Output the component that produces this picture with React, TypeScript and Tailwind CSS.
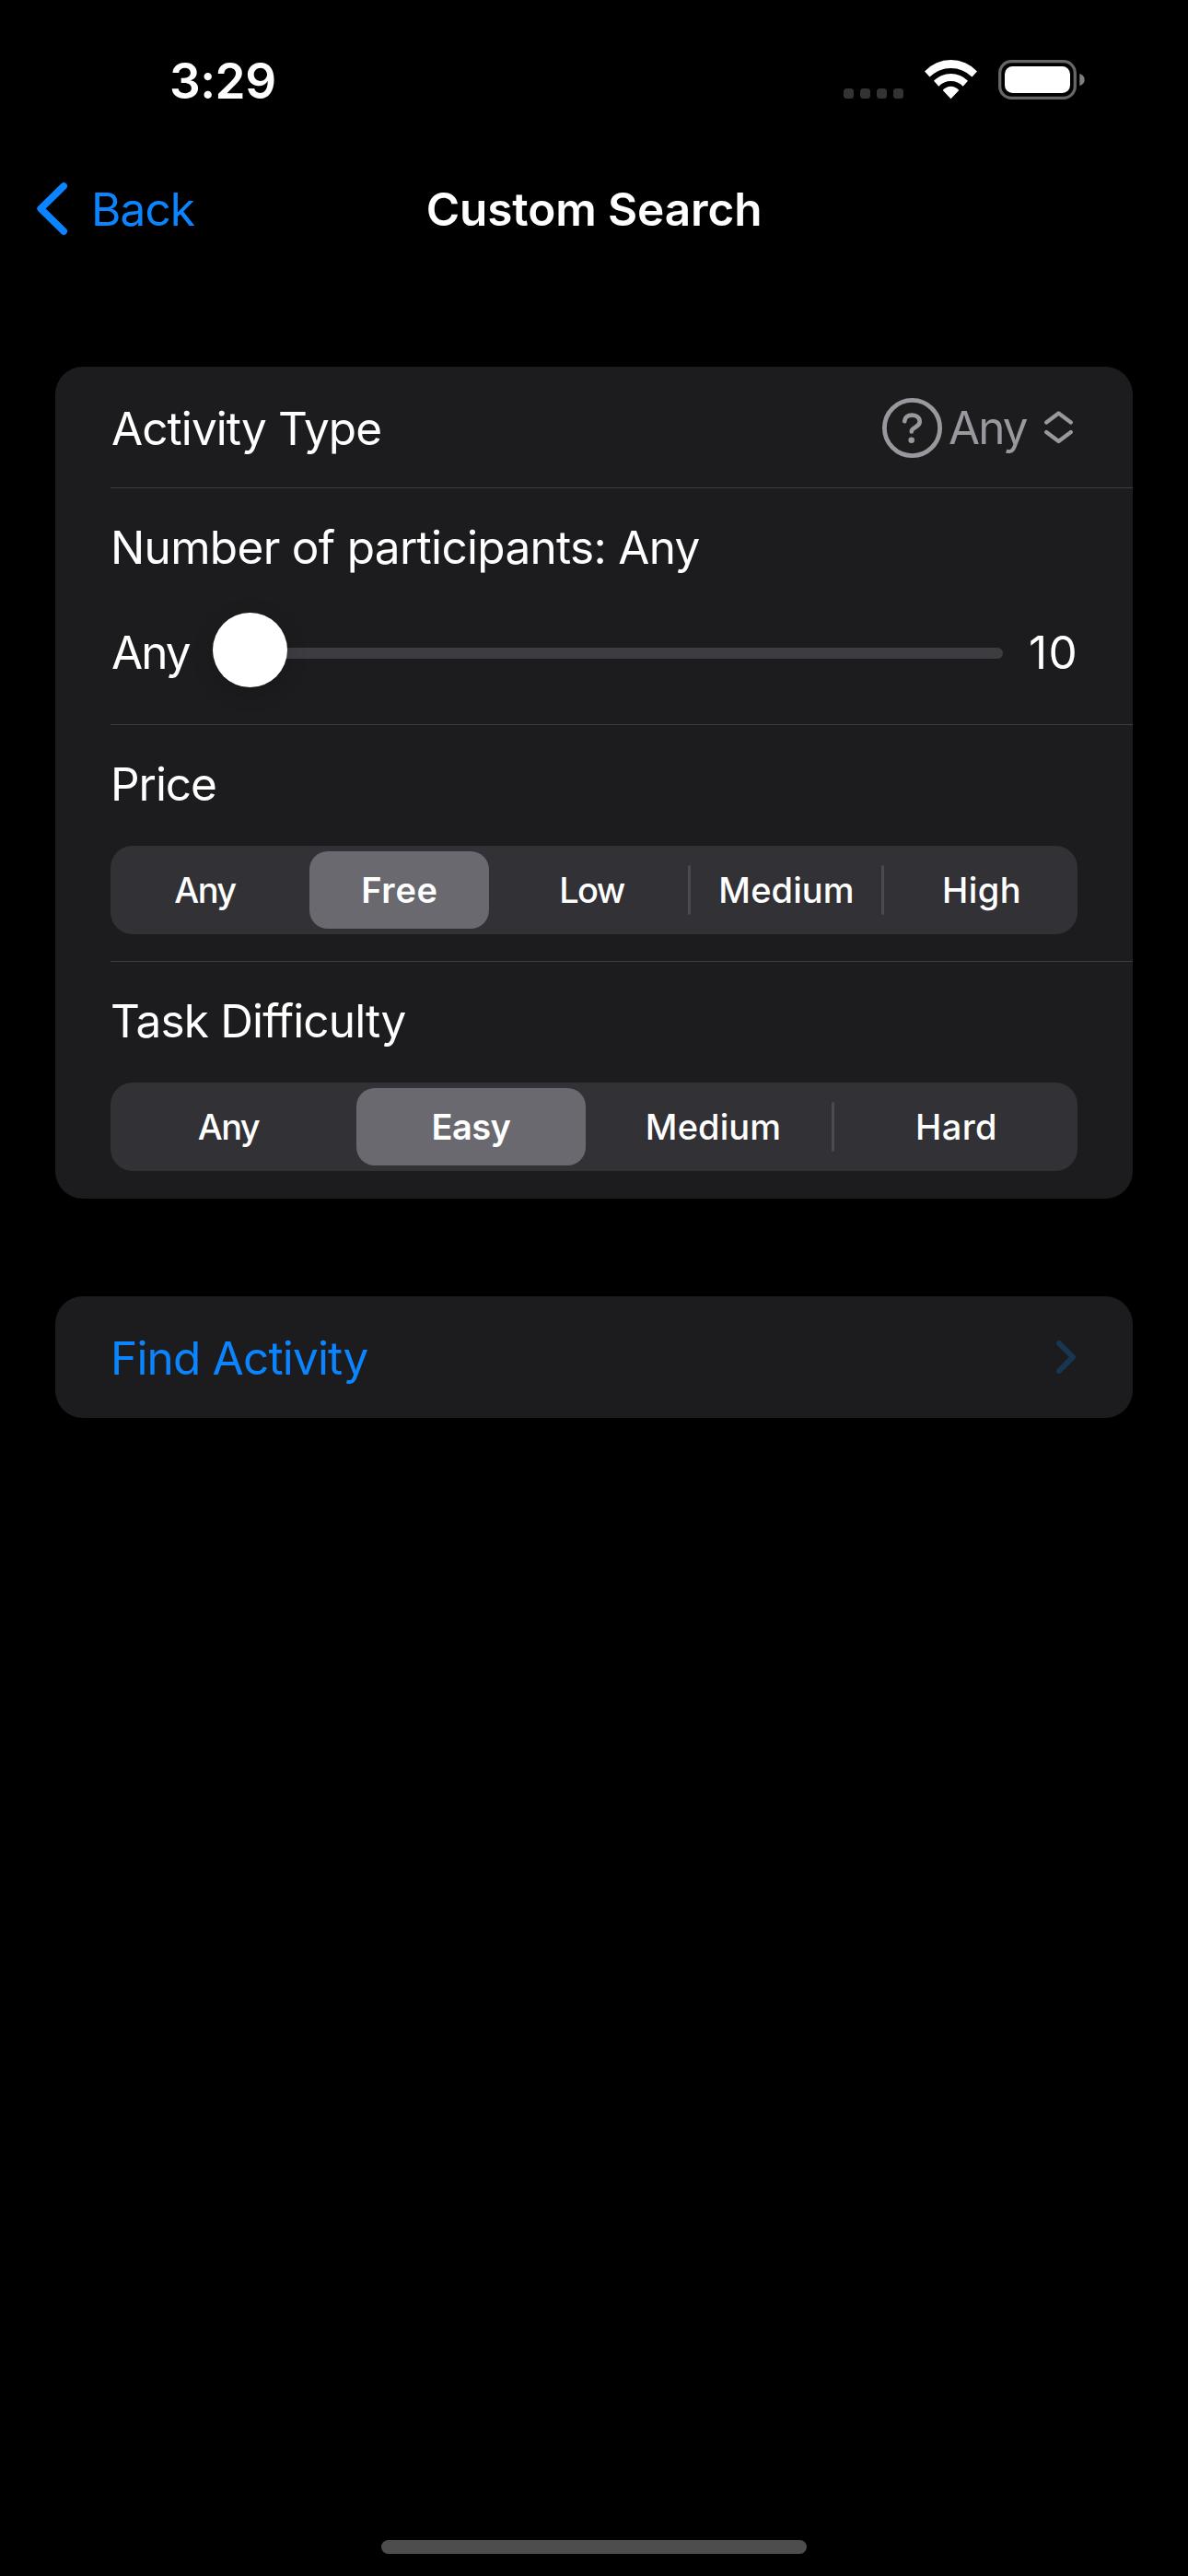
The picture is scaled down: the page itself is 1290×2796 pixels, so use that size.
type Option = { label: string; className: string };

const PRICES: Option[] = [
  { label: 'Any', className: 'tracking-[-1.6px] pr-[2px]' },
  { label: 'Free', className: 'tracking-[0.77px] pl-[1px]' },
  { label: 'Low', className: 'tracking-[-1.6px] pr-[2px]' },
  { label: 'Medium', className: 'tracking-[0.1px] pl-[1px]' },
  { label: 'High', className: 'tracking-[0.4px] pl-[2px]' },
];

const DIFFICULTIES: Option[] = [
  { label: 'Any', className: 'tracking-[-1.6px] pr-[2px]' },
  { label: 'Easy', className: 'tracking-[-0.57px]' },
  { label: 'Medium', className: 'tracking-[0.1px] pl-[1px]' },
  { label: 'Hard', className: 'tracking-[0.4px] pl-[1px]' },
];

function StatusBar() {
  return (
    <header className="flex h-[177px] items-start justify-between pr-[112px] pl-[184px]">
      <span className="mt-[58px] text-[53px] leading-[60px] font-semibold tracking-[-0.5px]">3:29</span>
      <div className="flex pt-[65px]">
        <div className="mt-[31px] flex h-[11px] gap-[7px]">
          {[0, 1, 2, 3].map((dot) => (
            <span key={dot} className="size-[11px] rounded-[3.5px] bg-[#333333]" />
          ))}
        </div>
        <svg className="ml-[23px] h-[43px] w-[57px]" viewBox="0 0 57 43" fill="white">
          <path d="M0 12.5A39 39 0 0 1 57 12.5L51.5 18.5A32.6 32.6 0 0 0 5.5 18.5Z" />
          <path d="M10 22.8A26 26 0 0 1 47 22.8L41.7 28.7A18.2 18.2 0 0 0 15.3 28.7Z" />
          <path d="M19.7 33A11.4 11.4 0 0 1 37.3 33L28.5 42.2Z" />
        </svg>
        <svg className="ml-[23px] h-[43px] w-[94px]" viewBox="0 0 94 43">
          <rect x="1.7" y="1.7" width="81.6" height="39.6" rx="12.5" fill="none" stroke="#666666" strokeWidth="3.3" />
          <rect x="7" y="7" width="71" height="29" rx="8.5" fill="white" />
          <path d="M88.3 15C91.6 16 93.7 18.4 93.7 21.6S91.6 27.2 88.3 28.2Z" fill="#808080" />
        </svg>
      </div>
    </header>
  );
}

function NavBar() {
  return (
    <nav className="grid h-[100px] grid-cols-3 items-start">
      <button className="flex items-start pl-[40px] text-[#0a84ff]">
        <svg className="mt-[21px] h-[57px] w-[33px]" viewBox="0 0 33 57" fill="none" stroke="currentColor" strokeWidth="7.6" strokeLinecap="round" strokeLinejoin="round">
          <path d="M29.2 4L4.2 28.5L29.2 53" />
        </svg>
        <span className="mt-[20px] ml-[26px] leading-[60px] tracking-[-0.9px]">Back</span>
      </button>
      <h1 className="mt-[20px] text-center leading-[60px] font-semibold tracking-[-0.12px]">Custom Search</h1>
    </nav>
  );
}

function Segmented({ options, selected, columns }: { options: Option[]; selected: number; columns: string }) {
  return (
    <div className={`grid h-[96px] rounded-[24px] bg-[#323136] ${columns}`}>
      {options.map((option, i) => {
        const last = i === options.length - 1;
        return (
          <div key={option.label} className="flex items-center">
            <div
              className={`flex flex-1 items-center justify-center text-[38px] leading-[48px] ${
                i === selected
                  ? 'mx-[6px] h-[84px] rounded-[20px] bg-[#69696f] font-semibold'
                  : 'font-[450]'
              } ${option.className}`}
            >
              {option.label}
            </div>
            {!last && (
              <span className={`h-[54px] w-[3px] rounded-full ${i <= selected ? 'bg-transparent' : 'bg-[#4b4a50]'}`} />
            )}
          </div>
        );
      })}
    </div>
  );
}

function ActivityTypeRow() {
  return (
    <div className="ml-[60px] flex h-[132px] items-start border-b border-[#3c3c3f]">
      <span className="mt-[37px] ml-px flex-1 leading-[60px] tracking-[-0.93px]">Activity Type</span>
      <div className="flex items-start pr-[65px] text-[#98989f]">
        <svg className="mt-[34px] size-[65px]" viewBox="0 0 65 65" fill="none" stroke="currentColor" strokeLinecap="round">
          <circle cx="32.5" cy="32.5" r="30.1" strokeWidth="4.8" />
          <path d="M24.2 25.2c.3-4 3.4-6.6 8.2-6.6 4.9 0 8.3 2.9 8.3 7.1 0 2.4-1.3 3.9-4.4 5.8-2.9 1.7-4.5 2.7-4.5 4.9" strokeWidth="4.7" />
          <circle cx="31.7" cy="45.7" r="3.3" fill="currentColor" stroke="none" />
        </svg>
        <span className="mt-[36px] ml-[7px] w-[104px] leading-[60px] tracking-[-2px]">Any</span>
        <svg className="mt-[48px] h-[36px] w-[31px]" viewBox="0 0 31 36" fill="none" stroke="currentColor" strokeWidth="4.2" strokeLinecap="round" strokeLinejoin="round">
          <path d="M2.2 12.5L15.5 2.5L28.8 12.5" />
          <path d="M2.2 23L15.5 33L28.8 23" />
        </svg>
      </div>
    </div>
  );
}

function ParticipantsRow() {
  return (
    <div className="ml-[60px] h-[257px] border-b border-[#3c3c3f] pt-[34px] pr-[60px]">
      <p className="leading-[60px] tracking-[-0.69px]">Number of participants: Any</p>
      <div className="mt-[41px] flex h-[81px] items-center">
        <span className="mt-[5px] w-[111px] pl-px leading-[60px] tracking-[-2px]">Any</span>
        <div className="relative mt-[7px] h-[12px] flex-1 rounded-full bg-[#3d3c41]">
          <span className="absolute -top-[38px] left-0 size-[81px] rounded-full bg-white shadow-[0_6px_24px_rgba(0,0,0,0.15)]" />
        </div>
        <span className="mt-[5px] w-[81px] pl-[28px] leading-[60px] tracking-[1.3px]">10</span>
      </div>
    </div>
  );
}

export default function App() {
  return (
    <div className="flex h-[2796px] w-[1290px] flex-col overflow-hidden bg-black font-['Inter',sans-serif] text-[49.5px] text-white">
      <StatusBar />
      <NavBar />
      <main className="flex flex-1 flex-col gap-[106px] px-[60px] pt-[121px]">
        <section className="h-[903px] rounded-[30px] bg-[#1c1c1e]">
          <ActivityTypeRow />
          <ParticipantsRow />
          <div className="ml-[60px] h-[257px] border-b border-[#3c3c3f] pt-[34px] pr-[60px]">
            <p className="mb-[37px] leading-[60px] tracking-[-1.07px]">Price</p>
            <Segmented options={PRICES} selected={1} columns="grid-cols-5" />
          </div>
          <div className="mx-[60px] pt-[34px]">
            <p className="mb-[37px] leading-[60px] tracking-[-0.84px]">Task Difficulty</p>
            <Segmented options={DIFFICULTIES} selected={1} columns="grid-cols-[261fr_264fr_261fr_264fr]" />
          </div>
        </section>
        <button className="flex h-[132px] items-start justify-between rounded-[30px] bg-[#1c1c1e] pr-[62px] pl-[60px] text-[#0a84ff]">
          <span className="mt-[37px] leading-[60px] tracking-[-0.82px]">Find Activity</span>
          <svg className="mt-[48px] h-[36px] w-[21px]" viewBox="0 0 21 36" fill="none" stroke="#173654" strokeWidth="5.8" strokeLinecap="round" strokeLinejoin="round">
            <path d="M3 3L18 18L3 33" />
          </svg>
        </button>
      </main>
      <div className="mb-[24px] h-[15px] w-[462px] self-center rounded-full bg-[#4d4d4d]" />
    </div>
  );
}
